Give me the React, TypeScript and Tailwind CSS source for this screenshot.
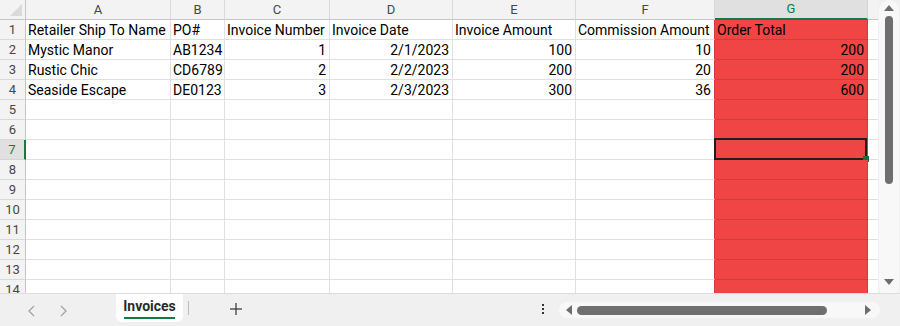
import React from "react";

const cols = ["A", "B", "C", "D", "E", "F", "G"];

type Cell = { v: string; r?: boolean };

const data: Cell[][] = [
  [
    { v: "Retailer Ship To Name" },
    { v: "PO#" },
    { v: "Invoice Number" },
    { v: "Invoice Date" },
    { v: "Invoice Amount" },
    { v: "Commission Amount" },
    { v: "Order Total" },
  ],
  [
    { v: "Mystic Manor" },
    { v: "AB1234" },
    { v: "1", r: true },
    { v: "2/1/2023", r: true },
    { v: "100", r: true },
    { v: "10", r: true },
    { v: "200", r: true },
  ],
  [
    { v: "Rustic Chic" },
    { v: "CD6789" },
    { v: "2", r: true },
    { v: "2/2/2023", r: true },
    { v: "200", r: true },
    { v: "20", r: true },
    { v: "200", r: true },
  ],
  [
    { v: "Seaside Escape" },
    { v: "DE0123" },
    { v: "3", r: true },
    { v: "2/3/2023", r: true },
    { v: "300", r: true },
    { v: "36", r: true },
    { v: "600", r: true },
  ],
];

function Tri({ dir }: { dir: "up" | "down" | "left" | "right" }) {
  const pts =
    dir === "up"
      ? "0,8 5,2 10,8"
      : dir === "down"
      ? "0,2 10,2 5,8"
      : dir === "left"
      ? "8,0 8,10 2,5"
      : "2,0 2,10 8,5";
  return (
    <svg width="10" height="10" viewBox="0 0 10 10">
      <polygon points={pts} fill="#6e6e6e" />
    </svg>
  );
}

export default function App() {
  const rows = Array.from({ length: 14 }, (_, i) => i + 1);
  return (
    <div className="w-[900px] h-[326px] flex flex-col bg-[#f0f0f0] overflow-hidden font-['Roboto',sans-serif] text-[14px] text-black">
      <div className="flex h-[293px]">
        <div className="w-[878px] h-[293px] overflow-hidden bg-white">
          <div className="grid grid-cols-[26px_145px_54px_105px_123px_123px_139px_153px_10px]">
            {/* header row */}
            <div className="h-[20px] bg-[#f3f3f3] border-r border-b border-[#c6c6c6] flex items-end justify-end">
              <svg width="14" height="14" viewBox="0 0 14 14" className="mb-[2px] mr-[2px]">
                <polygon points="13,1 13,13 1,13" fill="#dadada" />
              </svg>
            </div>
            {cols.map((c) =>
              c === "G" ? (
                <div
                  key={c}
                  className="h-[20px] bg-[#e0e0e0] border-r border-[#d4d4d4] border-b-2 border-b-[#137a41] flex items-center justify-center text-[13px] text-[#137a41]"
                >
                  {c}
                </div>
              ) : (
                <div
                  key={c}
                  className="h-[20px] bg-[#f3f3f3] border-r border-[#d9d9d9] border-b border-b-[#c6c6c6] flex items-center justify-center text-[13px] text-[#474747]"
                >
                  {c}
                </div>
              )
            )}
            <div className="h-[20px] bg-[#f3f3f3] border-b border-[#c6c6c6]" />

            {rows.map((r) => {
              const rowData = data[r - 1];
              const sel = r === 7;
              return (
                <React.Fragment key={r}>
                  <div
                    className={
                      sel
                        ? "h-[20px] bg-[#e0e0e0] border-r-2 border-r-[#137a41] border-b border-b-[#d4d4d4] flex items-center justify-center text-[13px] text-[#137a41]"
                        : "h-[20px] bg-[#f3f3f3] border-r border-r-[#c6c6c6] border-b border-b-[#d9d9d9] flex items-center justify-center text-[13px] text-[#474747]"
                    }
                  >
                    {r}
                  </div>
                  {cols.map((c, ci) => {
                    const cell = rowData ? rowData[ci] : undefined;
                    const isG = c === "G";
                    const isF = c === "F";
                    let cls =
                      "h-[20px] relative flex items-center whitespace-nowrap overflow-visible leading-none ";
                    if (isG) {
                      cls += "bg-[#ef4545] border-r border-b border-[#d43c3c] ";
                    } else if (isF) {
                      cls += "bg-white border-b border-b-[#e0e0e0] border-r border-r-[#d43c3c] ";
                    } else {
                      cls += "bg-white border-r border-b border-[#e0e0e0] ";
                    }
                    cls += cell && cell.r ? "justify-end pr-[3px]" : "justify-start pl-[2px]";
                    return (
                      <div key={c} className={cls}>
                        {cell ? <span>{cell.v}</span> : null}
                        {isG && sel ? (
                          <>
                            <div className="absolute -top-[2px] -left-[1px] right-0 -bottom-[1px] border-2 border-[#1f1f1f] pointer-events-none" />
                            <div className="absolute -right-[2px] -bottom-[3px] w-[6px] h-[6px] bg-[#1d6b3e]" />
                          </>
                        ) : null}
                      </div>
                    );
                  })}
                  <div className="h-[20px] bg-white border-b border-[#e0e0e0]" />
                </React.Fragment>
              );
            })}
          </div>
        </div>
        {/* vertical scrollbar */}
        <div className="w-[22px] h-[293px] flex justify-center">
          <div className="w-[20px] h-[297px] bg-[#f8f8f8] rounded-[10px] flex flex-col items-center">
            <div className="h-[16px] flex items-center justify-center">
              <Tri dir="up" />
            </div>
            <div className="w-[8px] h-[168px] rounded-full bg-[#6f6f6f]" />
            <div className="flex-1" />
            <div className="h-[14px] flex items-start justify-center mb-[6px]">
              <Tri dir="down" />
            </div>
          </div>
        </div>
      </div>

      {/* bottom bar */}
      <div className="h-[33px] flex border-t border-[#dcdcdc] bg-[#f0f0f0]">
        <div className="w-[116px] flex items-center pl-[26px] gap-[19px] pt-[1px]">
          <svg width="12" height="14" viewBox="0 0 12 14">
            <polyline points="8,2 3,7 8,12" fill="none" stroke="#a3a3a3" strokeWidth="1.3" />
          </svg>
          <svg width="12" height="14" viewBox="0 0 12 14">
            <polyline points="4,2 9,7 4,12" fill="none" stroke="#a3a3a3" strokeWidth="1.3" />
          </svg>
        </div>
        <div className="w-[67px] h-[28px] bg-white rounded-b-[6px] flex flex-col items-center justify-center">
          <span className="font-bold text-[14px] text-[#2b2b2b] leading-[16px] mt-[1px]">Invoices</span>
          <div className="w-[51px] h-[2px] bg-[#137a41] mt-[3px]" />
        </div>
        <div className="w-[10px] flex items-center justify-center">
          <div className="w-px h-[14px] bg-[#bdbdbd] mb-[4px]" />
        </div>
        <div className="w-[86px] flex items-center justify-center pb-[2px]">
          <svg width="14" height="14" viewBox="0 0 14 14">
            <line x1="7" y1="1" x2="7" y2="13" stroke="#333" strokeWidth="1.2" />
            <line x1="1" y1="7" x2="13" y2="7" stroke="#333" strokeWidth="1.2" />
          </svg>
        </div>
        <div className="w-[280px] flex items-center justify-end">
          <svg width="4" height="12" viewBox="0 0 4 12" className="mr-[14px] mb-[2px]">
            <rect x="1" y="1" width="2" height="2" fill="#333" />
            <rect x="1" y="5" width="2" height="2" fill="#333" />
            <rect x="1" y="9" width="2" height="2" fill="#333" />
          </svg>
        </div>
        <div className="w-[321px] h-[16px] mt-[8px] bg-[#f8f8f8] rounded-full flex items-center">
          <div className="w-[16px] flex justify-center ml-[2px]">
            <Tri dir="left" />
          </div>
          <div className="w-[250px] h-[9px] rounded-full bg-[#6f6f6f]" />
          <div className="flex-1" />
          <div className="w-[16px] flex justify-center mr-[4px]">
            <Tri dir="right" />
          </div>
        </div>
      </div>
    </div>
  );
}
